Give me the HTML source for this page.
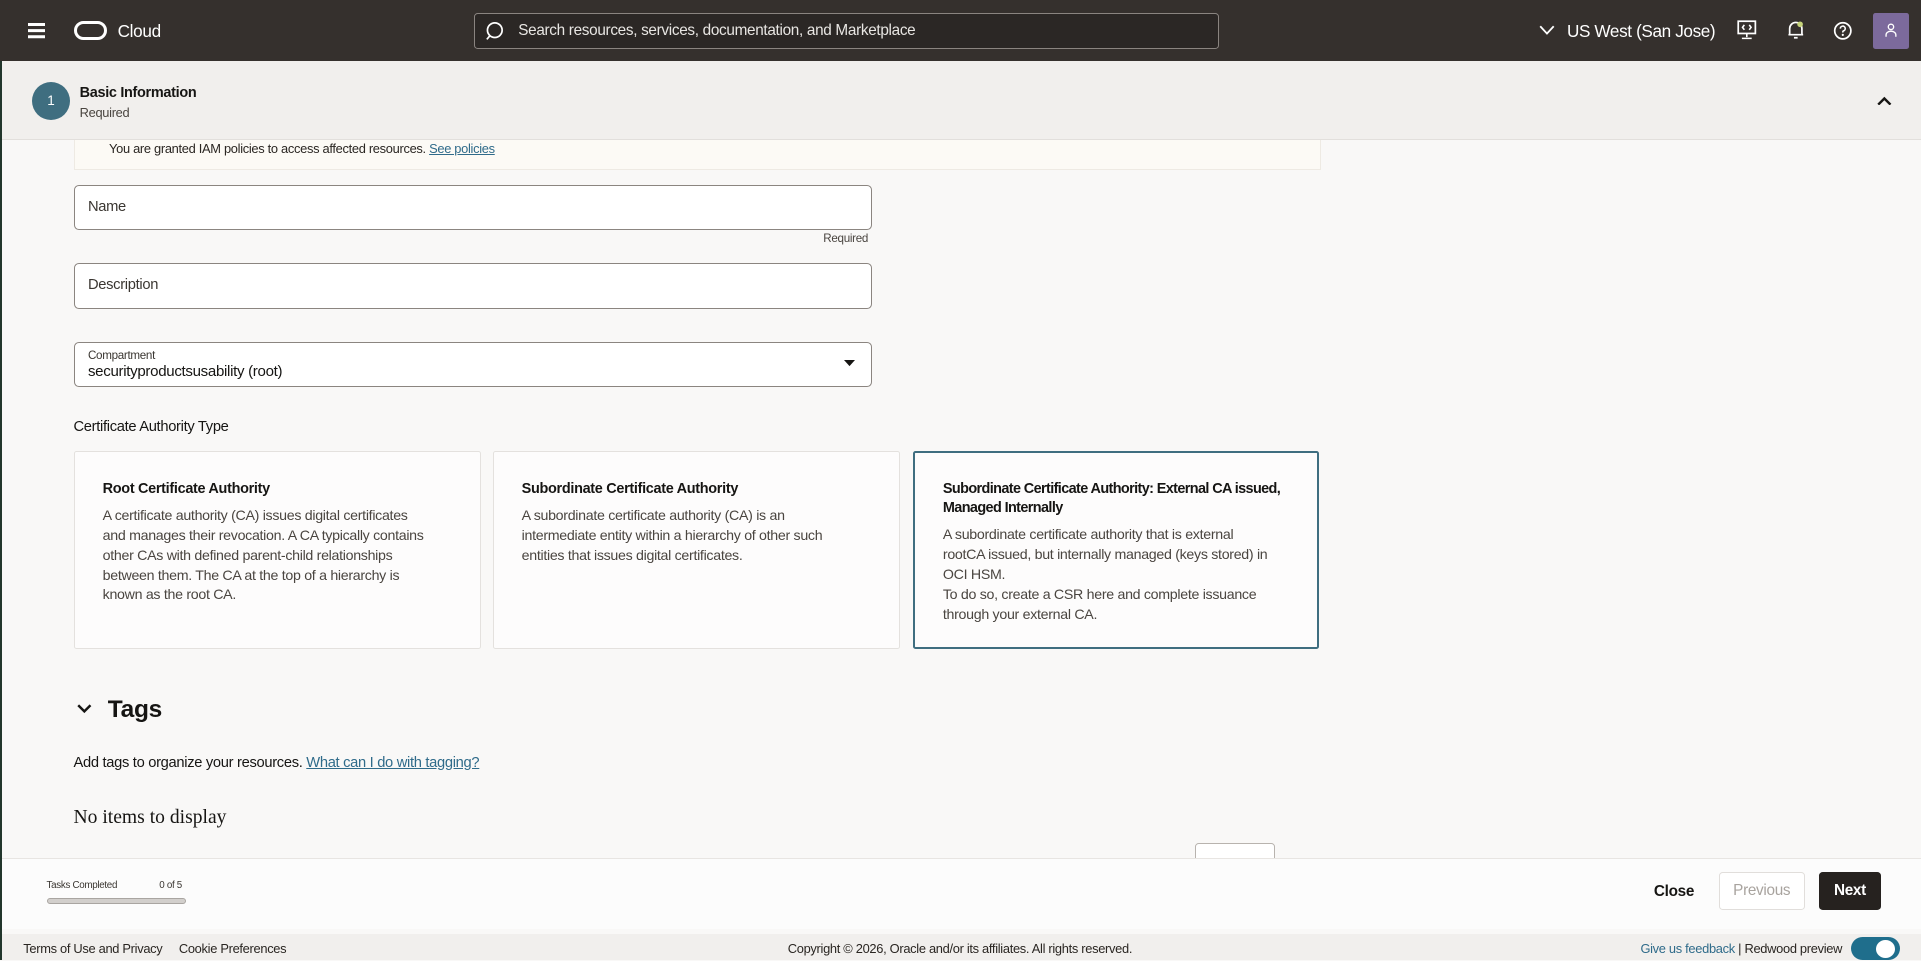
<!DOCTYPE html>
<html><head><meta charset="utf-8"><style>
html{zoom:1.22513}
*{box-sizing:border-box;margin:0;padding:0}
body{width:1568px;height:784px;overflow:hidden;font-family:"Liberation Sans",sans-serif;background:#f9f8f7;color:#161513;position:relative;letter-spacing:-0.25px}
.a{position:absolute;white-space:nowrap}
.hdr{left:0;top:0;width:1568px;height:50px;background:#35302d}
.inp{position:absolute;left:60px;width:652px;height:37px;border:1px solid #8b8580;border-radius:4px;background:#fff;font-size:12px;padding-left:11px;line-height:35px;color:#3a3631}
.card{position:absolute;top:368px;height:162px;width:333px;background:#fdfcfc;border:1px solid #e4e1de;border-radius:2px;padding:23px 40px 0 23px;font-size:11.6px;line-height:16.2px;color:#4a4540;white-space:normal}
.card b{display:block;color:#161513;font-size:11.8px;margin-bottom:6px;line-height:16px}
.ft{font-size:10.5px;color:#2a2622;top:768px}
</style></head><body>
<div style="position:absolute;left:0;top:50px;width:2px;height:734px;background:#22362c"></div>
<div class="a hdr"></div>
<div class="a" style="left:23px;top:19px;width:14px;height:2px;background:#fff;box-shadow:0 5px 0 #fff,0 10px 0 #fff"></div>
<div class="a" style="left:60px;top:17px;width:27px;height:16px;border:3px solid #fff;border-radius:8px"></div>
<div class="a" style="left:96px;top:17px;color:#fff;font-size:14px">Cloud</div>
<div class="a" style="left:387px;top:11px;width:608px;height:29px;border:1px solid #8a8480;border-radius:3px;background:#2b2725"></div>
<svg class="a" style="left:396px;top:17px" width="16" height="17" viewBox="0 0 16 17"><circle cx="8" cy="7.5" r="6" fill="none" stroke="#fff" stroke-width="1.4"/><line x1="4" y1="12" x2="1.5" y2="15" stroke="#fff" stroke-width="1.4"/></svg>
<div class="a" style="left:423px;top:18px;color:#e8e6e3;font-size:12.5px">Search resources, services, documentation, and Marketplace</div>
<svg class="a" style="left:1256px;top:20px" width="13" height="9"><path d="M1 1l5.5 6L12 1" fill="none" stroke="#fff" stroke-width="1.5"/></svg>
<div class="a" style="left:1279px;top:17px;color:#fff;font-size:14px;letter-spacing:-0.3px">US West (San Jose)</div>
<svg class="a" style="left:1418px;top:16px" width="16" height="17" viewBox="0 0 16 17"><rect x="1" y="1" width="14" height="10" fill="none" stroke="#fff" stroke-width="1.4"/><path d="M8 11v3M4 15h8M6 4L4.5 6 6 8M10 4l1.5 2L10 8" fill="none" stroke="#fff" stroke-width="1.3"/></svg>
<svg class="a" style="left:1458px;top:16px" width="16" height="17" viewBox="0 0 16 17"><path d="M3 12V7a5 5 0 0 1 10 0v5H2h12M6.5 14.5h3" fill="none" stroke="#fff" stroke-width="1.4"/><circle cx="11.5" cy="3.5" r="2.3" fill="#c7d47a"/></svg>
<svg class="a" style="left:1496px;top:17px" width="16" height="16" viewBox="0 0 16 16"><circle cx="8" cy="8" r="6.6" fill="none" stroke="#fff" stroke-width="1.4"/><path d="M6 6.2a2 2 0 1 1 2.5 1.9c-.5.2-.5.6-.5 1.3" fill="none" stroke="#fff" stroke-width="1.3"/><circle cx="8" cy="11.3" r=".9" fill="#fff"/></svg>
<div class="a" style="left:1529px;top:11px;width:29px;height:29px;background:#7c6a9c;border-radius:2px"></div>
<svg class="a" style="left:1537px;top:18px" width="13" height="14" viewBox="0 0 13 14"><circle cx="6.5" cy="4" r="2.2" fill="none" stroke="#fff" stroke-width="1.1"/><path d="M2.5 12v-1.5a4 3 0 0 1 8 0V12" fill="none" stroke="#fff" stroke-width="1.1"/></svg>

<div class="a" style="left:2px;top:50px;width:1566px;height:64px;background:#f1efed;border-bottom:1px solid #e2dfdc"></div>
<div class="a" style="left:26px;top:67px;width:31px;height:31px;border-radius:50%;background:#3f6e80;color:#fff;font-size:11px;text-align:center;line-height:31px">1</div>
<div class="a" style="left:65px;top:69px;font-size:11.8px;font-weight:bold">Basic Information</div>
<div class="a" style="left:65px;top:86px;font-size:10.5px;color:#4a4540">Required</div>
<svg class="a" style="left:1532px;top:78px" width="12" height="8"><path d="M1 7l5-5 5 5" fill="none" stroke="#161513" stroke-width="2"/></svg>

<div class="a" style="left:60px;top:114px;width:1018px;height:25px;background:#fcfaf5;border:1px solid #eeeae3;border-top:none"></div>
<div class="a" style="left:89px;top:115px;font-size:10.5px;color:#2a2622">You are granted IAM policies to access affected resources. <span style="color:#2f6b8a;text-decoration:underline">See policies</span></div>

<div class="inp" style="top:151px">Name</div>
<div class="a" style="left:672px;top:189px;font-size:9.5px;color:#4a4540">Required</div>
<div class="inp" style="top:215px">Description</div>
<div class="inp" style="top:279px;line-height:normal;padding-top:5px"><div style="font-size:9.5px;color:#3a3631">Compartment</div><div style="font-size:12.3px;color:#161513;margin-top:1px">securityproductsusability (root)</div></div>
<svg class="a" style="left:689px;top:294px" width="9" height="6"><path d="M0 0h9L4.5 5z" fill="#161513"/></svg>

<div class="a" style="left:60px;top:342px;font-size:12px">Certificate Authority Type</div>
<div class="card" style="left:60px"><b>Root Certificate Authority</b>A certificate authority (CA) issues digital certificates and manages their revocation. A CA typically contains other CAs with defined parent-child relationships between them. The CA at the top of a hierarchy is known as the root CA.</div>
<div class="card" style="left:402px"><b>Subordinate Certificate Authority</b>A subordinate certificate authority (CA) is an intermediate entity within a hierarchy of other such entities that issues digital certificates.</div>
<div class="card" style="left:745px;width:332px;border:2px solid #3f6e80;padding-top:22px;padding-right:30px"><b style="letter-spacing:-0.5px">Subordinate Certificate Authority: External CA issued, Managed Internally</b><span style="display:block;padding-right:10px">A subordinate certificate authority that is external rootCA issued, but internally managed (keys stored) in OCI HSM.<br>To do so, create a CSR here and complete issuance through your external CA.</span></div>

<svg class="a" style="left:63px;top:575px" width="12" height="8"><path d="M1 1l5 5 5-5" fill="none" stroke="#161513" stroke-width="2"/></svg>
<div class="a" style="left:88px;top:568px;font-size:20px;font-weight:bold">Tags</div>
<div class="a" style="left:60px;top:616px;font-size:12px">Add tags to organize your resources. <span style="color:#2f6b8a;text-decoration:underline">What can I do with tagging?</span></div>
<div class="a" style="left:60px;top:659px;font-size:16px;font-family:'Liberation Serif',serif;letter-spacing:0">No items to display</div>
<div class="a" style="left:975px;top:688px;width:66px;height:20px;border:1px solid #b8b3ae;border-radius:3px;background:#fff"></div>

<div class="a" style="left:2px;top:700px;width:1566px;height:58px;background:#fcfcfc;border-top:1px solid #e8e5e2"></div>
<div class="a" style="left:38px;top:718px;font-size:8px;color:#3a3631">Tasks Completed</div>
<div class="a" style="left:130px;top:718px;font-size:8px;color:#3a3631">0 of 5</div>
<div class="a" style="left:38px;top:733px;width:114px;height:5px;border-radius:3px;background:#d2cfcc;border:1px solid #a9a5a1"></div>
<div class="a" style="left:1350px;top:721px;font-size:12.5px;font-weight:bold">Close</div>
<div class="a" style="left:1403px;top:712px;width:70px;height:31px;border:1px solid #e1dedb;border-radius:3px;background:#fff;color:#a8a39e;font-size:12.5px;text-align:center;line-height:29px">Previous</div>
<div class="a" style="left:1485px;top:712px;width:50px;height:31px;border-radius:3px;background:#26221f;color:#fff;font-size:12.5px;font-weight:bold;text-align:center;line-height:31px">Next</div>

<div class="a" style="left:2px;top:762px;width:1566px;height:22px;background:#f1efed"></div>
<div class="a ft" style="left:19px">Terms of Use and Privacy</div>
<div class="a ft" style="left:146px">Cookie Preferences</div>
<div class="a ft" style="left:643px">Copyright © 2026, Oracle and/or its affiliates. All rights reserved.</div>
<div class="a ft" style="left:1339px"><span style="color:#2f6b8a">Give us feedback</span> | Redwood preview</div>
<div class="a" style="left:1511px;top:765px;width:40px;height:19px;border-radius:10px;background:#1f6e8c"></div>
<div class="a" style="left:1531px;top:767px;width:16px;height:15px;border-radius:50%;background:#fff"></div>
</body></html>
